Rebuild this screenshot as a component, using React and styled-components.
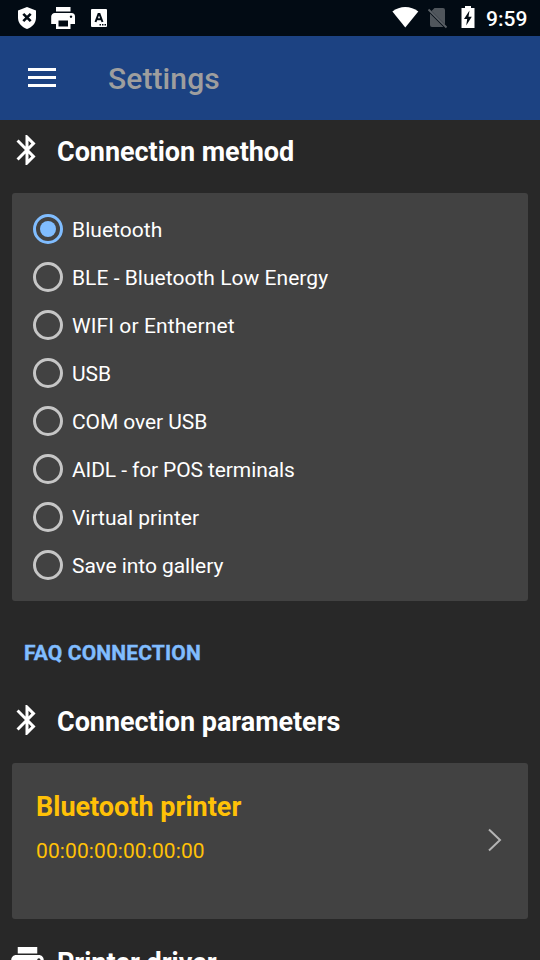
import React from "react";
import styled, { createGlobalStyle } from "styled-components";

const Global = createGlobalStyle`
  *, *::before, *::after { box-sizing: border-box; }
  body {
    margin: 0;
    background: #282828;
    color: #fff;
    font-family: Roboto, sans-serif;
    overflow: hidden;
  }
`;

const Screen = styled.div`
  width: 540px;
  height: 960px;
  overflow: hidden;
  display: flex;
  flex-direction: column;
  background: #282828;
`;

const StatusBar = styled.header`
  flex: none;
  height: 36px;
  display: flex;
  justify-content: space-between;
  background: #020b14;
`;

const StatusGroup = styled.div`
  display: flex;
  align-items: center;
`;

const NotificationGroup = styled(StatusGroup)`
  padding-left: 9px;
`;

const StatusIcon = styled.svg`
  display: block;
  width: ${(p) => p.$width || 36}px;
  height: 36px;
  fill: #fff;
`;

const Clock = styled.time`
  width: 54px;
  padding-top: 1px;
  font-size: 21px;
  line-height: 36px;
  font-weight: 500;
`;

const AppBar = styled.nav`
  flex: none;
  height: 84px;
  display: flex;
  align-items: center;
  gap: 52px;
  padding-left: 28px;
  background: #1c4282;
`;

const MenuButton = styled.button`
  width: 28px;
  height: 19px;
  margin-top: -1px;
  padding: 0;
  border: 0;
  background: none;
  display: flex;
  flex-direction: column;
  justify-content: space-between;
`;

const MenuLine = styled.span`
  height: 3px;
  width: 28px;
  background: #fff;
`;

const Title = styled.h1`
  margin: 2px 0 0;
  font-size: 30px;
  line-height: 36px;
  font-weight: 500;
  letter-spacing: 0.1px;
  color: #9e9e9e;
`;

const SectionHeader = styled.div`
  flex: none;
  height: 73px;
  padding: 12px 0 0 9px;
  display: flex;
  gap: 12px;
`;

const SectionIcon = styled.svg`
  flex: none;
  width: ${(p) => p.$size}px;
  height: ${(p) => p.$size}px;
  margin: ${(p) => (36 - p.$size) / 2}px;
  fill: #fff;
`;

const SectionTitle = styled.h2`
  margin: 4px 0 0;
  font-size: 27px;
  line-height: 32px;
  font-weight: 700;
  letter-spacing: -0.04px;
  white-space: nowrap;
`;

const Card = styled.section`
  flex: none;
  margin: 0 12px;
  border-radius: 3px;
  background: #424242;
`;

const RadioList = styled(Card)`
  height: 408px;
  padding: 12px 0 0 21px;
`;

const RadioRow = styled.label`
  height: 48px;
  display: flex;
  align-items: center;
  gap: 9px;
  font-size: 21px;
  line-height: 25px;
`;

const RadioMark = styled.span`
  width: 30px;
  height: 30px;
  flex: none;
  display: grid;
  place-items: center;
  border: 3px solid ${(p) => (p.$checked ? "#80bdff" : "#c6c6c6")};
  border-radius: 50%;

  &::after {
    content: "";
    width: 16px;
    height: 16px;
    border-radius: 50%;
    background: ${(p) => (p.$checked ? "#80bdff" : "transparent")};
  }
`;

const RadioLabel = styled.span`
  padding-top: 2px;
  letter-spacing: ${(p) => p.$tracking}px;
`;

const FaqLink = styled.a`
  flex: none;
  height: 89px;
  padding: 40px 0 0 24px;
  font-size: 21px;
  line-height: 25px;
  font-weight: 700;
  letter-spacing: 0.15px;
  -webkit-text-stroke: 0.4px #80bdff;
  color: #80bdff;
`;

const DeviceCard = styled(Card)`
  height: 156px;
  margin-bottom: 12px;
  padding: 28px 26px 0 24px;
  display: flex;
  justify-content: space-between;
  color: #ffc107;
`;

const DeviceName = styled.h3`
  margin: 0;
  font-size: 27px;
  line-height: 32px;
  font-weight: 700;
`;

const DeviceAddress = styled.p`
  margin: 16px 0 0;
  font-size: 21px;
  line-height: 25px;
  letter-spacing: 0.1px;
`;

const Chevron = styled.svg`
  width: 14px;
  height: 24px;
  margin-top: 37px;
  fill: none;
  stroke: #b4b4b4;
  stroke-width: 2;
`;

const BLUETOOTH =
  "M17.71 7.71L12 2h-1v7.59L6.41 5 5 6.41 10.59 12 5 17.59 6.41 19 11 14.41V22h1l5.71-5.71-4.3-4.29 4.3-4.29zM13 5.83l1.88 1.88L13 9.59V5.83zm1.88 10.46L13 18.17v-3.76l1.88 1.88z";
const PRINTER =
  "M19 8H5c-1.66 0-3 1.34-3 3v6h4v4h12v-4h4v-6c0-1.66-1.34-3-3-3zm-3 11H8v-5h8v5zm3-7c-.55 0-1-.45-1-1s.45-1 1-1 1 .45 1 1-.45 1-1 1zm-1-9H6v4h12V3z";

const METHODS = [
  { label: "Bluetooth", tracking: 0.05 },
  { label: "BLE - Bluetooth Low Energy", tracking: 0.03 },
  { label: "WIFI or Enthernet", tracking: 0.1 },
  { label: "USB", tracking: 0 },
  { label: "COM over USB", tracking: -0.08 },
  { label: "AIDL - for POS terminals", tracking: -0.11 },
  { label: "Virtual printer", tracking: 0 },
  { label: "Save into gallery", tracking: -0.07 },
];

function Section({ icon, iconSize = 36, children }) {
  return (
    <SectionHeader>
      <SectionIcon $size={iconSize} viewBox="0 0 24 24">
        <path d={icon} />
      </SectionIcon>
      <SectionTitle>{children}</SectionTitle>
    </SectionHeader>
  );
}

export default function App() {
  return (
    <>
      <Global />
      <Screen>
        <StatusBar>
          <NotificationGroup>
            <StatusIcon viewBox="9 0 36 36">
              <path d="M27 7l9 3.500v7.500c0 5-3.800 9.200-9 11-5.200-1.800-9-6-9-11v-7.500z" />
              <path d="M23.300 13.800l7.400 7.400M30.700 13.800l-7.400 7.400" stroke="#020b14" strokeWidth="2.600" />
            </StatusIcon>
            <StatusIcon viewBox="45 0 36 36">
              <path d="M56 7h14.500v4.500H56zM55 13h16.500a3.500 3.500 0 0 1 3.500 3.500V24h-4.500v5H56v-5h-4.800v-7.500A3.500 3.500 0 0 1 55 13zm3.500 7.500v6h9.500v-6zM71 15.500a1.200 1.200 0 1 0 .01 0z" fillRule="evenodd" />
            </StatusIcon>
            <StatusIcon viewBox="81 0 36 36">
              <rect x="91" y="9" width="16" height="18" rx="1" />
              <path d="M95.500 22l3-8h1l3 8M96.500 19.300h5" fill="none" stroke="#020b14" strokeWidth="2" />
              <path d="M99.500 24h1.500v1.500h-1.500zM102 24h1.500v1.500H102zM104.500 24h1.500v1.500h-1.500z" fill="#020b14" />
            </StatusIcon>
          </NotificationGroup>
          <StatusGroup>
            <StatusIcon $width={33} viewBox="387 0 33 36">
              <path d="M392.400 11.500C399.500 5.500 411 5.500 418.300 11.500L405.300 27.500z" />
            </StatusIcon>
            <StatusIcon $width={33} viewBox="420 0 33 36">
              <path d="M434.500 8H443a2 2 0 0 1 2 2v14.500L431.500 11zM430 13.500L443.500 27H432a2 2 0 0 1-2-2z" fill="#50565c" />
              <path d="M428.500 9.500l18 18" stroke="#5c6268" strokeWidth="1.800" />
            </StatusIcon>
            <StatusIcon $width={33} viewBox="453 0 33 36">
              <path d="M465 6h6v2h3.500v20h-13V8h3.500z" />
              <path d="M469.500 10.500l-5.500 8.500h3.200l-1 6.500 5.600-8.700h-3.300z" fill="#020b14" />
            </StatusIcon>
            <Clock>9:59</Clock>
          </StatusGroup>
        </StatusBar>
        <AppBar>
          <MenuButton aria-label="Menu">
            <MenuLine />
            <MenuLine />
            <MenuLine />
          </MenuButton>
          <Title>Settings</Title>
        </AppBar>
        <Section icon={BLUETOOTH}>Connection method</Section>
        <RadioList>
          {METHODS.map(({ label, tracking }, i) => (
            <RadioRow key={label}>
              <RadioMark $checked={i === 0} />
              <RadioLabel $tracking={tracking}>{label}</RadioLabel>
            </RadioRow>
          ))}
        </RadioList>
        <FaqLink>FAQ CONNECTION</FaqLink>
        <Section icon={BLUETOOTH}>Connection parameters</Section>
        <DeviceCard>
          <div>
            <DeviceName>Bluetooth printer</DeviceName>
            <DeviceAddress>00:00:00:00:00:00</DeviceAddress>
          </div>
          <Chevron viewBox="0 0 14 24">
            <path d="M1 1.500L12 12 1 22.500" />
          </Chevron>
        </DeviceCard>
        <Section icon={PRINTER} iconSize={39}>Printer driver</Section>
      </Screen>
    </>
  );
}
